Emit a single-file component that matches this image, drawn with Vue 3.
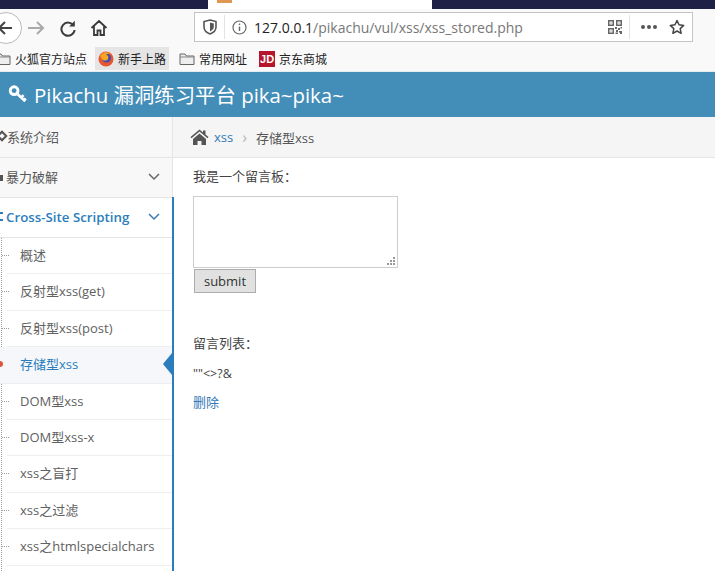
<template>
  <div class="screen">
    <div class="tabstrip">
      <div class="tab"><span class="tab-mark"></span></div>
    </div>

    <div class="toolbar">
      <div class="back-btn">
        <svg width="24" height="24" viewBox="0 0 24 24"><path d="M18 12H5M11 6l-6 6 6 6" fill="none" stroke="#444" stroke-width="2"/></svg>
      </div>
      <svg class="forward" width="20" height="20" viewBox="0 0 20 20"><path d="M2 10h15M11 4l6 6-6 6" fill="none" stroke="#a9a9a9" stroke-width="2"/></svg>
      <svg class="reload" width="18" height="18" viewBox="0 0 18 18"><path d="M14.5 6.5A6.6 6.6 0 1 0 15.6 11" fill="none" stroke="#3a3a3a" stroke-width="2"/><path d="M15.8 1.8v5.6h-5.6z" fill="#3a3a3a"/></svg>
      <svg class="home" width="18" height="18" viewBox="0 0 18 18"><path d="M1.5 9 9 2l7.5 7M4 7.5V16h3.5v-4.5h3V16H14V7.5" fill="none" stroke="#3a3a3a" stroke-width="1.8"/></svg>

      <div class="urlbar">
        <svg class="shield" width="14" height="16" viewBox="0 0 14 16"><path d="M7 1l6 1.6V8c0 3.500-2.800 5.800-6 7-3.200-1.200-6-3.500-6-7V2.600z" fill="none" stroke="#555" stroke-width="1.600"/><path d="M7 3.500l3.800 1V8c0 2-1.700 3.400-3.800 4.400z" fill="#555"/></svg>
        <span class="url-sep"></span>
        <svg class="info" width="15" height="15" viewBox="0 0 15 15"><circle cx="7.500" cy="7.500" r="6.500" fill="none" stroke="#666" stroke-width="1.200"/><path d="M7.500 6.500v4.500M7.500 3.600v1.500" stroke="#666" stroke-width="1.400"/></svg>
        <span class="url"><b>127.0.0.1</b>/pikachu/vul/xss/xss_stored.php</span>
        <svg class="qr" width="14" height="14" viewBox="0 0 14 14" fill="#666"><path d="M0 0h6v6H0zM1.500 1.500v3h3v-3zM8 0h6v6H8zM9.500 1.500v3h3v-3zM0 8h6v6H0zM1.500 9.500v3h3v-3zM2.500 2.500h1v1h-1zM10.500 2.500h1v1h-1zM2.500 10.500h1v1h-1zM7 7h2v2H7zM10 8h2v2h-2zM12.500 7H14v1.500h-1.500zM8 10h2v2H8zM11 11h3v1.500h-3zM7.500 12.500H10V14H7.500zM12 12.500h2V14h-2z"/></svg>
        <span class="url-sep right"></span>
        <span class="dots"><i></i><i></i><i></i></span>
        <svg class="star" width="16" height="16" viewBox="0 0 16 16"><path d="M8 1.500l2 4.300 4.700.6-3.500 3.200.9 4.700L8 12l-4.100 2.300.9-4.700L1.300 6.400 6 5.800z" fill="none" stroke="#444" stroke-width="1.500" stroke-linejoin="round"/></svg>
      </div>
    </div>

    <div class="bookmarks">
      <span v-for="b in bookmarks" :key="b.label" class="bookmark" :class="{ hovered: b.icon === 'fox' }">
        <svg v-if="b.icon === 'folder'" width="16" height="14" viewBox="0 0 16 14"><path d="M1 12.500V2h5l1.500 2H15v8.500z" fill="#eee" stroke="#666"/><path d="M1 5h14" stroke="#888"/></svg>
        <svg v-else-if="b.icon === 'fox'" width="16" height="16" viewBox="0 0 16 16"><circle cx="8" cy="8" r="7.500" fill="#e8552f"/><circle cx="8.500" cy="7" r="4.500" fill="#3b4fb5"/><path d="M2 5c2-4 8-5 11-2-2-1-4 0-5 1 2 0 3 2 2 4-1 2-5 2-6 0-1-1-1-2-2-3z" fill="#f6a623"/></svg>
        <span v-else class="jd">JD</span>
        {{ b.label }}
      </span>
    </div>

    <header class="site-header">
      <svg class="key" width="20" height="20" viewBox="0 0 18 18"><circle cx="5.500" cy="6" r="3.500" fill="none" stroke="#fff" stroke-width="2.600"/><path d="M8 8.500l7.500 7M12 12l2-2M14.500 14.500l1.500-1.500" stroke="#fff" stroke-width="2.400" fill="none"/></svg>
      <span>Pikachu 漏洞练习平台 pika~pika~</span>
    </header>

    <div class="page">
      <aside class="sidebar">
        <div class="nav-top first">
          <span class="nav-icon diamond"></span><span>系统介绍</span>
        </div>
        <div class="nav-top">
          <span class="nav-icon lock"></span><span class="pad">暴力破解</span>
          <svg class="chev" width="12" height="8" viewBox="0 0 12 8"><path d="M1 1l5 5 5-5" fill="none" stroke="#666" stroke-width="1.500"/></svg>
        </div>
        <div class="nav-top open">
          <span class="nav-icon code"></span><span class="pad">Cross-Site Scripting</span>
          <svg class="chev" width="12" height="8" viewBox="0 0 12 8"><path d="M1 1l5 5 5-5" fill="none" stroke="#3a7ab0" stroke-width="1.500"/></svg>
        </div>
        <ul class="submenu">
          <li v-for="item in subItems" :key="item" :class="{ active: item === '存储型xss' }">{{ item }}</li>
        </ul>
      </aside>

      <main class="content">
        <div class="crumbs">
          <svg width="19" height="16" viewBox="0 0 19 16"><path d="M9.500 0.500 0.500 8l1 1.200L9.500 2.600l8 6.600 1-1.200L15.500 5.500V1.500h-2.500v2zM3 10v6h4.500v-4h4v4H16v-6L9.500 4.500z" fill="#555"/></svg>
          <a class="link">xss</a>
          <span class="crumb-sep">›</span>
          <span>存储型xss</span>
        </div>
        <div class="body">
          <p class="label">我是一个留言板：</p>
          <div class="msg-box">
            <svg class="grip" width="8" height="8" viewBox="0 0 8 8" fill="#999"><path d="M6 0h2v2H6zM3 3h2v2H3zM6 3h2v2H6zM0 6h2v2H0zM3 6h2v2H3zM6 6h2v2H6z"/></svg>
          </div>
          <button class="submit">submit</button>
          <p class="label list-label">留言列表：</p>
          <p class="msg">""&lt;&gt;?&amp;</p>
          <a class="link del">删除</a>
        </div>
      </main>
    </div>
  </div>
</template>

<script setup>
const bookmarks = [
  { label: '火狐官方站点', icon: 'folder' },
  { label: '新手上路', icon: 'fox' },
  { label: '常用网址', icon: 'folder' },
  { label: '京东商城', icon: 'jd' },
];

const subItems = [
  '概述',
  '反射型xss(get)',
  '反射型xss(post)',
  '存储型xss',
  'DOM型xss',
  'DOM型xss-x',
  'xss之盲打',
  'xss之过滤',
  'xss之htmlspecialchars',
];
</script>

<style>
html, body {
  margin: 0;
  overflow: hidden;
}
</style>

<style scoped>
.screen {
  width: 715px;
  height: 571px;
  overflow: hidden;
  background: #fff;
  font-family: "Open Sans", "Noto Sans CJK SC", sans-serif;
  font-size: 13px;
  color: #585858;
}

.tabstrip {
  height: 9px;
  background: #1e2145;
  padding-left: 208px;
}

.tab {
  width: 224px;
  height: 9px;
  background: #fff;
  padding-left: 9px;
  box-sizing: border-box;
}

.tab-mark {
  display: block;
  width: 15px;
  height: 3px;
  background: #e0974f;
}

.toolbar {
  height: 37px;
  background: #f9f9fa;
  display: flex;
  align-items: center;
  box-sizing: border-box;
}

.back-btn {
  width: 30px;
  height: 30px;
  margin-left: -10px;
  border: 1px solid #bbb;
  border-radius: 50%;
  background: #fff;
  display: flex;
  align-items: center;
  justify-content: center;
  flex: none;
}

.forward {
  margin-left: 4px;
}

.reload {
  margin-left: 13px;
}

.home {
  margin-left: 13px;
}

.urlbar {
  margin-left: 86px;
  width: 499px;
  height: 30px;
  flex: none;
  background: #fff;
  border: 1px solid #c4c4c4;
  box-sizing: border-box;
  display: flex;
  align-items: center;
  margin-top: -1px;
}

.shield {
  margin-left: 8px;
}

.url-sep {
  width: 1px;
  height: 24px;
  background: #e3e3e3;
  margin-left: 7px;
}

.url-sep.right {
  margin-left: 7px;
}

.info {
  margin-left: 7px;
}

.url {
  margin-left: 7px;
  width: 354px;
  flex: none;
  font-size: 14px;
  color: #777;
  white-space: nowrap;
}

.url b {
  font-weight: 400;
  color: #222;
}

.dots {
  display: flex;
  gap: 2px;
  margin-left: 11px;
}

.dots i {
  width: 4px;
  height: 4px;
  border-radius: 50%;
  background: #555;
}

.star {
  margin-left: 12px;
}

.bookmarks {
  height: 25px;
  background: #f9f9fa;
  display: flex;
  align-items: center;
  margin-left: -8px;
  font-size: 12px;
  color: #222;
  border-bottom: 1px solid #e4ebef;
  box-sizing: content-box;
}

.bookmark {
  height: 23px;
  display: flex;
  align-items: center;
  gap: 4px;
  padding: 0 3px;
  margin-right: 5px;
  white-space: nowrap;
}

.bookmark:nth-child(2) {
  margin-right: 7px;
}

.bookmark:nth-child(3) {
  margin-right: 6px;
}

.bookmark.hovered {
  background: #e5e5e6;
}

.jd {
  width: 16px;
  height: 16px;
  background: #b7162a;
  color: #fff;
  font: 700 11px/16px "Liberation Sans", sans-serif;
  text-align: center;
}

.site-header {
  height: 45px;
  box-sizing: border-box;
  background: #438eb9;
  color: #fff;
  display: flex;
  align-items: center;
  gap: 6px;
  padding: 0 0 2px 8px;
  font-size: 20.400px;
}

.page {
  display: flex;
  height: 454px;
}

.sidebar {
  width: 173px;
  flex: none;
  box-sizing: border-box;
  background: #f2f2f2;
  border-right: 1px solid #e5e5e5;
  position: relative;
}

.nav-top {
  height: 40px;
  box-sizing: border-box;
  border-bottom: 1px solid #e5e5e5;
  background: #f8f8f8;
  display: flex;
  align-items: center;
  padding: 0 12px 2px 0;
  color: #585858;
}

.nav-top.first {
  height: 41px;
}

.nav-top.open {
  background: #fff;
  color: #2b7dbc;
  font-weight: 600;
  font-size: 13.300px;
}

.nav-icon {
  flex: none;
  display: block;
}

.diamond {
  width: 8px;
  height: 8px;
  margin-right: 1px;
  transform: rotate(45deg);
  border: 2px solid #555;
  margin-left: -2px;
  box-sizing: border-box;
}

.lock {
  width: 3px;
  height: 6px;
  background: #555;
  margin-top: 2px;
}

.code {
  width: 3px;
  height: 9px;
  border-top: 2px solid #2b7dbc;
  border-bottom: 2px solid #2b7dbc;
  box-sizing: border-box;
}

.pad {
  margin-left: 3px;
}

.chev {
  margin-left: auto;
}

.submenu {
  list-style: none;
  margin: 0;
  padding: 0;
  height: 333px;
  background: #fff;
  position: relative;
}

.sidebar::after {
  content: "";
  position: absolute;
  right: -2px;
  top: 80px;
  bottom: 0;
  width: 2px;
  background: #2b7dbc;
}

.submenu::before {
  content: "";
  position: absolute;
  left: 1px;
  top: 0;
  bottom: 0;
  border-left: 1px dotted #9a9a9a;
}

.submenu li {
  height: 36.400px;
  box-sizing: border-box;
  margin-left: 7px;
  padding-left: 13px;
  line-height: 34px;
  border-bottom: 1px solid #eee;
  position: relative;
  color: #616161;
  white-space: nowrap;
}

.submenu li::before {
  content: "";
  position: absolute;
  left: -5px;
  top: 17px;
  width: 7px;
  border-top: 1px dotted #9a9a9a;
}

.submenu li.active {
  margin-left: 0;
  padding-left: 20px;
  background: #f5f7fb;
  color: #2b7dbc;
}

.submenu li.active::before {
  left: -3px;
  top: 14px;
  width: 6px;
  height: 6px;
  border: 0;
  border-radius: 50%;
  background: #d9573d;
}

.submenu li.active::after {
  content: "";
  position: absolute;
  right: 0;
  top: 6px;
  border: 11px solid transparent;
  border-left: 0;
  border-right: 9px solid #2b7dbc;
}

.content {
  flex: 1;
  min-width: 0;
}

.crumbs {
  height: 41px;
  box-sizing: border-box;
  background: #f5f5f5;
  border-bottom: 1px solid #e5e5e5;
  display: flex;
  align-items: center;
  padding-left: 17px;
  color: #555;
}

.crumbs .link {
  margin-left: 5px;
}

.crumb-sep {
  margin: 0 9px;
  color: #b2b6bf;
  font-size: 16px;
}

.link {
  color: #337ab7;
}

.body {
  padding: 8px 20px;
  display: flex;
  flex-direction: column;
  align-items: flex-start;
  color: #444;
}

.label {
  margin: 0;
  line-height: 20px;
}

.msg-box {
  width: 205px;
  height: 72px;
  box-sizing: border-box;
  margin-top: 10px;
  border: 1px solid #cdcdcd;
  background: #fff;
  position: relative;
}

.grip {
  position: absolute;
  right: 2px;
  bottom: 2px;
}

.submit {
  margin: 1px 0 0 1px;
  width: 62px;
  height: 24px;
  padding: 0;
  background: #e1e1e1;
  border: 1px solid #adadad;
  color: #333;
  font: 13px "Open Sans", sans-serif;
}

.list-label {
  margin-top: 40px;
}

.msg {
  margin: 11px 0 0;
  font-size: 12.500px;
  line-height: 20px;
}

.del {
  margin-top: 8px;
  line-height: 20px;
}
</style>
